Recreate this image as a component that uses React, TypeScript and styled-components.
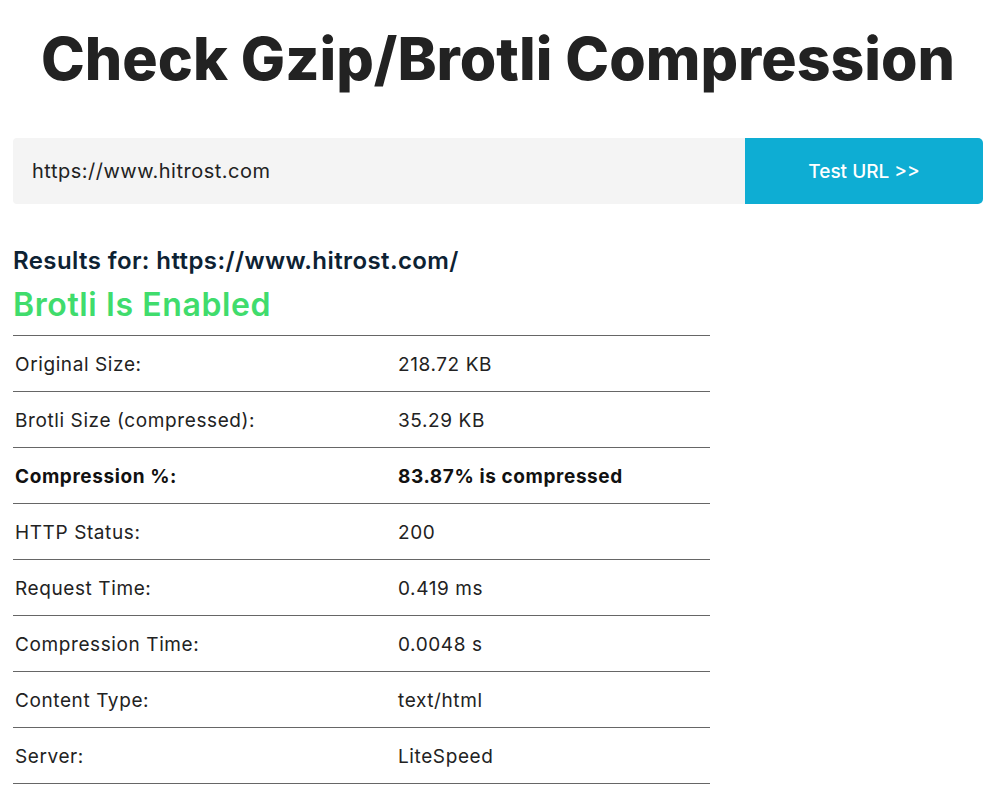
import styled, { createGlobalStyle } from "styled-components";

const GlobalStyle = createGlobalStyle`
    html, body {
        margin: 0;
        padding: 0;
        background: #ffffff;
    }
    body {
        font-family: "Inter", "Open Sans", sans-serif;
        color: #222222;
    }
`;

interface Row {
    label: string;
    value: string;
    bold?: boolean;
}

const rows: Row[] = [
    { label: "Original Size:", value: "218.72 KB" },
    { label: "Brotli Size (compressed):", value: "35.29 KB" },
    { label: "Compression %:", value: "83.87% is compressed", bold: true },
    { label: "HTTP Status:", value: "200" },
    { label: "Request Time:", value: "0.419 ms" },
    { label: "Compression Time:", value: "0.0048 s" },
    { label: "Content Type:", value: "text/html" },
    { label: "Server:", value: "LiteSpeed" },
];

export default function App() {
    return (
        <>
            <GlobalStyle />
            <StyledPage>
                <StyledTitle>Check Gzip/Brotli Compression</StyledTitle>
                <StyledForm>
                    <StyledInput defaultValue="https://www.hitrost.com" />
                    <StyledButton type="button">Test URL &gt;&gt;</StyledButton>
                </StyledForm>
                <StyledResultsFor>Results for: https://www.hitrost.com/</StyledResultsFor>
                <StyledStatus>Brotli Is Enabled</StyledStatus>
                <StyledTable>
                    {rows.map((row) => (
                        <StyledRow key={row.label} $bold={row.bold}>
                            <StyledCell>{row.label}</StyledCell>
                            <StyledCell>{row.value}</StyledCell>
                        </StyledRow>
                    ))}
                </StyledTable>
            </StyledPage>
        </>
    );
}

const StyledPage = styled.div`
    padding: 0 12px 0 13px;
    display: flex;
    flex-direction: column;
`;

const StyledTitle = styled.h1`
    margin: 0;
    padding-top: 22px;
    height: 116px;
    box-sizing: border-box;
    text-align: center;
    font-size: 59px;
    font-weight: 800;
    letter-spacing: 0;
    color: #222222;
    line-height: 74px;
`;

const StyledForm = styled.div`
    display: flex;
    height: 66px;
    margin-top: 22px;
`;

const StyledInput = styled.input`
    flex: 1;
    min-width: 0;
    border: none;
    outline: none;
    background: #f4f4f4;
    border-radius: 4px 0 0 4px;
    padding: 0 19px;
    font-family: inherit;
    font-size: 20px;
    letter-spacing: 0.5px;
    color: #222222;
`;

const StyledButton = styled.button`
    width: 238px;
    border: none;
    background: #0eadd3;
    border-radius: 0 5px 5px 0;
    color: #ffffff;
    font-family: inherit;
    font-size: 19px;
    font-weight: 500;
    cursor: pointer;
`;

const StyledResultsFor = styled.div`
    margin-top: 42px;
    font-size: 24px;
    font-weight: 600;
    letter-spacing: 0.4px;
    color: #0d2233;
    line-height: 30px;
`;

const StyledStatus = styled.div`
    margin-top: 10px;
    font-size: 32px;
    font-weight: 600;
    letter-spacing: 0.6px;
    color: #40dc6c;
    line-height: 38px;
`;

const StyledTable = styled.div`
    width: 697px;
    margin-top: 11px;
    border-top: 1px solid #666666;
`;

const StyledRow = styled.div<{ $bold?: boolean }>`
    display: grid;
    grid-template-columns: 383px 1fr;
    height: 55px;
    align-items: center;
    border-bottom: 1px solid #666666;
    font-size: 19px;
    letter-spacing: 0.6px;
    font-weight: ${(p) => (p.$bold ? 700 : 400)};
    color: ${(p) => (p.$bold ? "#111111" : "#222222")};
`;

const StyledCell = styled.div`
    padding-left: 2px;
    padding-top: 2px;
`;
